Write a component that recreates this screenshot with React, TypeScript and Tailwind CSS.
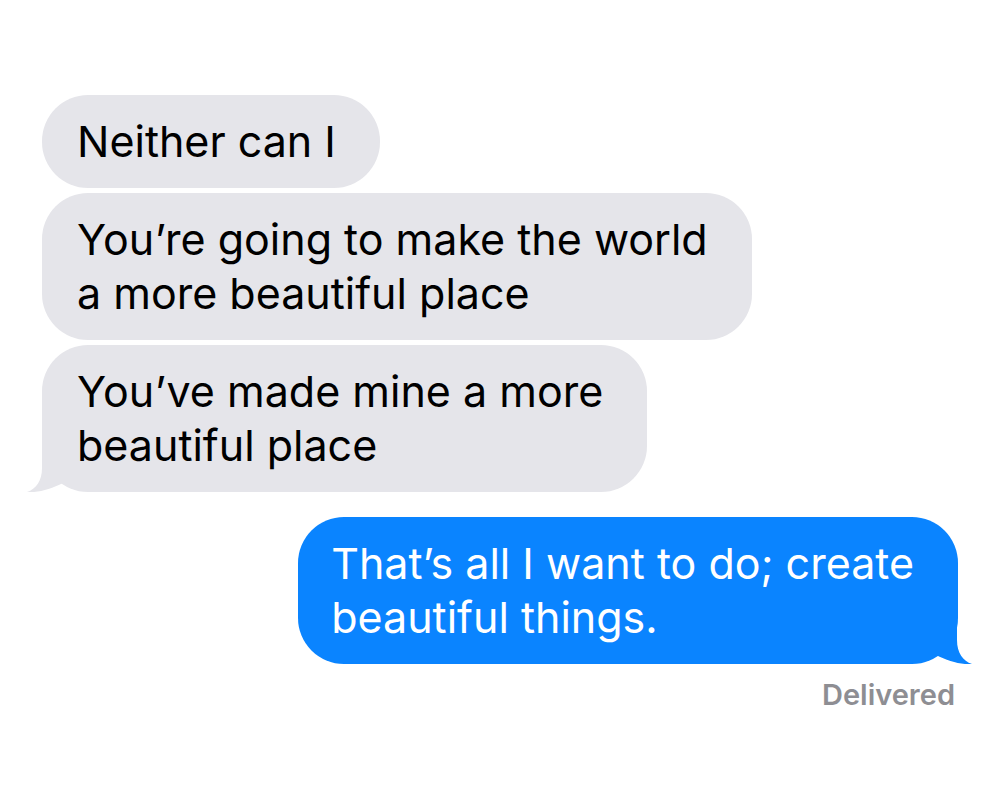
import React from 'react'

function Tail({ side, color }: { side: 'left' | 'right'; color: string }) {
  return (
    <svg
      width="40"
      height="52"
      viewBox="0 0 40 52"
      className={
        side === 'left'
          ? 'absolute bottom-0 -left-[16px]'
          : 'absolute bottom-0 -right-[15px] -scale-x-100'
      }
    >
      <path d="M16 0 L16 28 C16 41 10 49 1 52 C12 53 25 49 37 43 L37 0 Z" fill={color} />
    </svg>
  )
}

function Bubble({
  lines,
  from,
  tail,
}: {
  lines: string[]
  from: 'them' | 'me'
  tail?: boolean
}) {
  const them = from === 'them'
  return (
    <div
      className={
        them
          ? 'relative w-fit rounded-[46px] bg-[#e5e5ea] text-black pl-[35px] pr-[44px] pt-[19px] pb-[20px]'
          : 'relative w-fit self-end rounded-[46px] bg-[#0a84ff] text-white pl-[33px] pr-[44px] pt-[19px] pb-[20px]'
      }
    >
      <p className="text-[43px] leading-[54px] whitespace-nowrap">
        {lines.map((l, i) => (
          <span key={i} className="block">
            {l}
          </span>
        ))}
      </p>
      {tail && <Tail side={them ? 'left' : 'right'} color={them ? '#e5e5ea' : '#0a84ff'} />}
    </div>
  )
}

export default function App() {
  return (
    <div
      className="min-h-[811px] w-[1000px] bg-white px-[42px] pt-[95px] flex flex-col"
      style={{ fontFamily: 'Inter, Roboto, "Liberation Sans", sans-serif' }}
    >
      <div className="flex flex-col gap-[5px]">
        <Bubble from="them" lines={['Neither can I']} />
        <Bubble from="them" lines={['You\u2019re going to make the world', 'a more beautiful place']} />
        <Bubble from="them" lines={['You\u2019ve made mine a more', 'beautiful place']} tail />
      </div>
      <div className="mt-[25px] flex flex-col">
        <Bubble from="me" lines={['That\u2019s all I want to do; create', 'beautiful things.']} tail />
        <div className="self-end mt-[14px] pr-[3px] text-[29px] leading-[34px] font-semibold text-[#8e8e93]">
          Delivered
        </div>
      </div>
    </div>
  )
}
